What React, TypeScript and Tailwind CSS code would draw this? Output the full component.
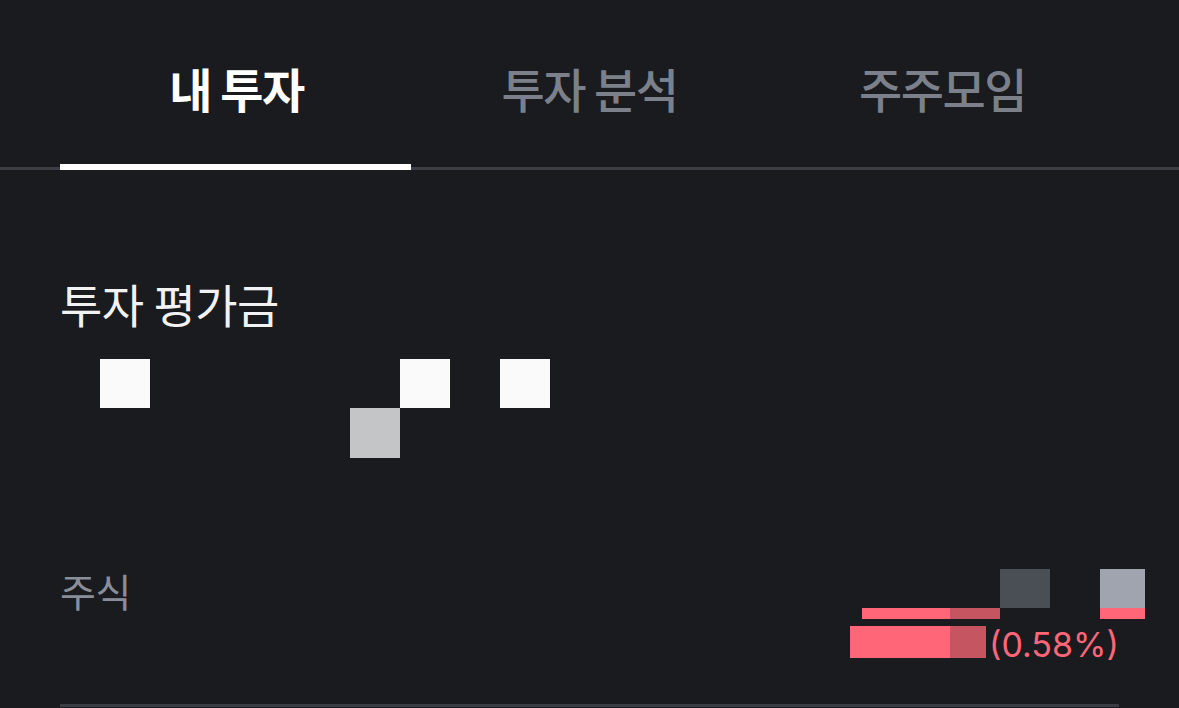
import React, { useState } from 'react';

const TABS = ['내 투자', '투자 분석', '주주모임'];

const KR = { fontFamily: '"Noto Sans CJK KR", "Noto Sans", sans-serif' };
const NUM = { fontFamily: 'Inter, "Noto Sans CJK KR", sans-serif' };

const App = () => {
  const [tab, setTab] = useState(0);

  return (
    <div className="w-full h-[708px] bg-[#1a1b1f] overflow-hidden" style={KR}>
      {/* Tabs */}
      <div className="flex px-[60px] h-[170px] border-b-[3px] border-[#3c3e45]">
        {TABS.map((t, i) => (
          <button
            key={t}
            onClick={() => setTab(i)}
            className={`relative flex-1 flex items-center justify-center pt-[8px] text-[47px] leading-none tracking-[-1.5px] ${
              tab === i ? 'text-white font-bold' : 'text-[#7b808a] font-medium'
            }`}
          >
            {t}
            {tab === i && <span className="absolute left-0 right-[2px] bottom-[-3px] h-[6px] bg-white" />}
          </button>
        ))}
      </div>

      <div className="px-[60px]">
        {/* Valuation */}
        <h2 className="mt-[110px] text-[46px] leading-none text-[#f2f2f3] tracking-[-0.5px]">투자 평가금</h2>

        {/* masked amount */}
        <div className="mt-[33px] ml-[40px] grid grid-cols-[repeat(9,50px)] grid-rows-[49px_50px]">
          <div className="col-start-1 row-start-1 bg-[#fafafa]" />
          <div className="col-start-6 row-start-2 bg-[#c4c5c7]" />
          <div className="col-start-7 row-start-1 bg-[#fafafa]" />
          <div className="col-start-9 row-start-1 bg-[#fafafa]" />
        </div>

        {/* Stocks row */}
        <div className="mt-[111px] flex justify-between items-start">
          <span className="mt-[2px] text-[39px] leading-none text-[#8a8e98] tracking-[-0.5px]">주식</span>

          <div className="mr-[-26px] w-[295px] flex flex-col">
            <div className="self-end flex h-[39px]">
              <div className="w-[50px] bg-[#4a4e55]" />
              <div className="w-[50px]" />
              <div className="w-[45px] bg-[#a0a4ae]" />
            </div>
            <div className="self-end flex h-[11px]">
              <div className="w-[88px] bg-[#ff6678]" />
              <div className="w-[50px] bg-[#c55661]" />
              <div className="w-[100px]" />
              <div className="w-[45px] bg-[#ff6678]" />
            </div>
            <div className="mt-[7px] flex items-start h-[32px]">
              <div className="w-[100px] h-[32px] bg-[#ff6678]" />
              <div className="w-[36px] h-[32px] bg-[#c55661]" />
              <span className="ml-[3px] mt-[2px] text-[34px] leading-none text-[#ff6678]" style={NUM}>
                (0.58%)
              </span>
            </div>
          </div>
        </div>

        <div className="mt-[46px] h-[3px] bg-[#3a3c44]" />
      </div>
    </div>
  );
};

export default App;
